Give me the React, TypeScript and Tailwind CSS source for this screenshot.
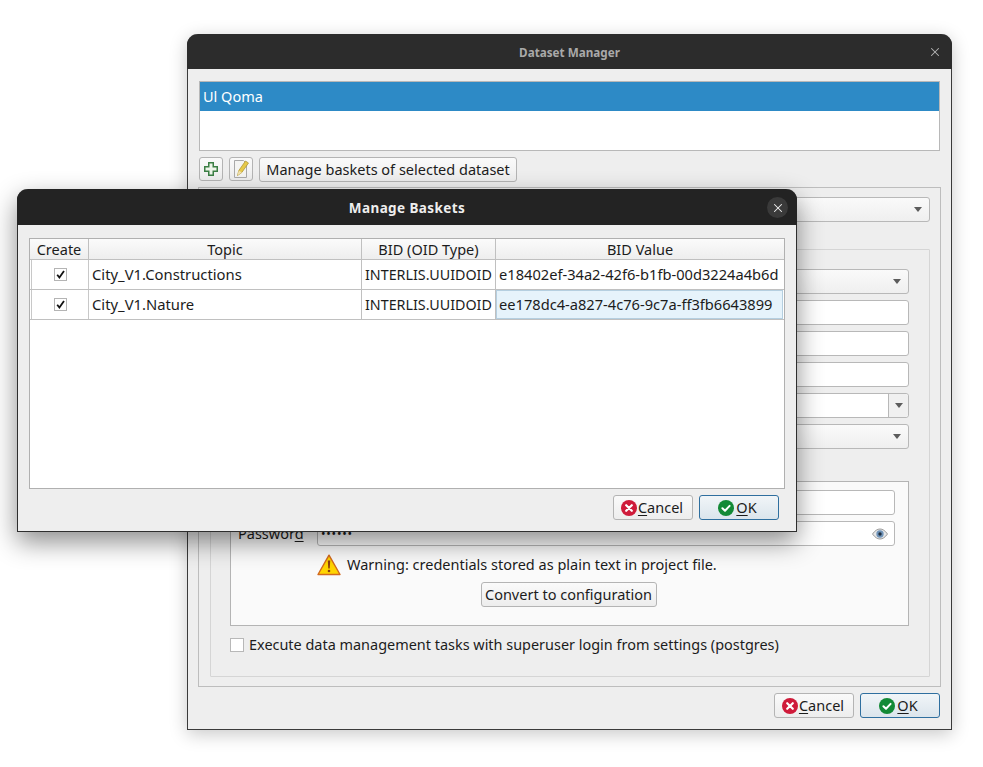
import React from 'react';
import { X } from 'lucide-react';

const font = "font-['Noto_Sans','Open_Sans',sans-serif]";

const Caret = () => (
    <svg width="8" height="5" viewBox="0 0 8 5"><path d="M0 0h8L4 5z" fill="#5c5c5c" /></svg>
);

const CancelIcon = () => (
    <svg width="16" height="16" viewBox="0 0 16 16" className="shrink-0">
        <circle cx="8" cy="8" r="8" fill="#cf1b3a" />
        <path d="M5.2 5.2l5.6 5.6M10.8 5.2l-5.600 5.600" stroke="#fff" strokeWidth="2.2" strokeLinecap="round" />
    </svg>
);

const OkIcon = () => (
    <svg width="16" height="16" viewBox="0 0 16 16" className="shrink-0">
        <circle cx="8" cy="8" r="8" fill="#138a36" />
        <path d="M4.4 8.2l2.6 2.5 4.6-4.8" stroke="#fff" strokeWidth="2" fill="none" strokeLinecap="round" strokeLinejoin="round" />
    </svg>
);

const PlusIcon = () => (
    <svg width="16" height="16" viewBox="0 0 16 16">
        <path d="M5.750 1.750h4.500v4h4v4.500h-4v4h-4.500v-4h-4v-4.500h4z" fill="#eef5ea" stroke="#3c7f45" strokeWidth="1.500" />
    </svg>
);

const NoteIcon = () => (
    <svg width="18" height="20" viewBox="0 0 18 20">
        <path d="M2.500 1.500h9l3 3v14h-12z" fill="#f4f4f2" stroke="#a9a9a9" />
        <path d="M5.500 16.500l1.300-5 6.700-9.500 3 2-6.700 9.500z" fill="#e6c94a" stroke="#a98f2c" strokeWidth="0.700" />
        <path d="M5.500 16.500l1.300-5 3 2z" fill="#f2e2b0" />
    </svg>
);

const WarningIcon = () => (
    <svg width="24" height="22" viewBox="0 0 24 22">
        <path d="M12 1.200L23 20.500H1z" fill="#ffd400" stroke="#d2691e" strokeWidth="1.400" strokeLinejoin="round" />
        <path d="M10.800 6.500h2.400l-.5 8h-1.400z" fill="#8a3d10" />
        <circle cx="12" cy="17" r="1.300" fill="#8a3d10" />
    </svg>
);

const EyeIcon = () => (
    <svg width="16" height="12" viewBox="0 0 16 12">
        <path d="M.5 6C3 2.500 5.500 1 8 1s5 1.500 7.500 5C13 9.500 10.500 11 8 11S3 9.500.5 6z" fill="#e8e8e8" stroke="#9a9a9a" />
        <circle cx="8" cy="6" r="3.700" fill="#6f93b8" />
        <circle cx="8" cy="6" r="1.700" fill="#1f2d3d" />
    </svg>
);

const Field = ({ className = '', children }: { className?: string; children?: React.ReactNode }) => (
    <div className={`h-[25px] bg-white border border-[#b8b8b8] rounded-[3px] flex items-center ${className}`}>{children}</div>
);

const Combo = ({ className = '' }: { className?: string }) => (
    <div className={`h-[25px] bg-gradient-to-b from-[#fafafa] to-[#efefef] border border-[#b8b8b8] rounded-[3px] flex items-center justify-end pr-[7px] ${className}`}>
        <Caret />
    </div>
);

const Button = ({ primary, children, className = '' }: { primary?: boolean; children: React.ReactNode; className?: string }) => (
    <div
        className={`rounded-[3px] border flex items-center justify-center text-[14.500px] text-[#1c1c1c] ${
            primary
                ? 'border-[#2f6f9f] bg-gradient-to-b from-[#f1f5f8] to-[#dbe5ec]'
                : 'border-[#b4b4b4] bg-gradient-to-b from-[#fafafa] to-[#ededed]'
        } ${className}`}
    >
        {children}
    </div>
);

const DialogButtons = () => (
    <div className="flex justify-end gap-[6px]">
        <Button className="w-[80px] h-[25px] gap-[1px] pr-[2px]">
            <CancelIcon />
            <span><span className="underline underline-offset-2">C</span>ancel</span>
        </Button>
        <Button primary className="w-[80px] h-[25px] gap-[2px] pr-[3px]">
            <OkIcon />
            <span><span className="underline underline-offset-2">O</span>K</span>
        </Button>
    </div>
);

const rows = [
    { topic: 'City_V1.Constructions', type: 'INTERLIS.UUIDOID', value: 'e18402ef-34a2-42f6-b1fb-00d3224a4b6d' },
    { topic: 'City_V1.Nature', type: 'INTERLIS.UUIDOID', value: 'ee178dc4-a827-4c76-9c7a-ff3fb6643899' },
];

const colCls = 'grid grid-cols-[59px_273px_134px_288px]';

const Checkbox = () => (
    <div className="w-[13px] h-[13px] bg-white border border-[#b4b4b4] flex items-center justify-center">
        <svg width="9" height="9" viewBox="0 0 9 9">
            <path d="M1.200 4.800l2.200 2.700L8 1" stroke="#111" strokeWidth="1.800" fill="none" />
        </svg>
    </div>
);

const HeaderCell = ({ label }: { label: string }) => (
    <div className="h-[21px] pt-[2px] flex items-center justify-center border-r border-b border-[#c0c0c0] bg-gradient-to-b from-[#fbfbfb] to-[#eeeeee] last:border-r-0 whitespace-nowrap">
        {label}
    </div>
);

const BasketsDialog = () => (
    <div className="absolute left-[17px] top-[189px] w-[780px] h-[343px] flex flex-col rounded-t-[11px] border-x border-b border-[#2e2e2e] bg-[#eeeeee] shadow-[0_10px_26px_rgba(0,0,0,0.45)]">
        <div className="relative h-[37px] -mx-px pt-[3px] rounded-t-[11px] bg-[#232323] flex items-center justify-center text-[13.500px] font-bold text-[#eeeeee] tracking-[0.4px]">
            Manage Baskets
            <div className="absolute right-[9px] top-[8px] w-[21px] h-[21px] rounded-full bg-[#3a3a3a] flex items-center justify-center">
                <X size={14} strokeWidth={1.800} className="text-[#f2f2f2]" />
            </div>
        </div>
        <div className="flex-1 flex flex-col px-[11px] pt-[13px] pb-[11px]">
            <div className="w-[756px] h-[251px] bg-white border border-[#b0b0b0] text-[14.500px] text-[#1c1c1c]">
                <div className={colCls}>
                    {['Create', 'Topic', 'BID (OID Type)', 'BID Value'].map((h) => (
                        <HeaderCell key={h} label={h} />
                    ))}
                </div>
                {rows.map((r, i) => (
                    <div key={r.topic} className={`${colCls} h-[30px] border-b border-[#c0c0c0]`}>
                        <div className="flex items-center justify-center ml-px border-l border-r border-[#c8c8c8]">
                            <Checkbox />
                        </div>
                        <div className="flex items-center pl-[3px] border-r border-[#c0c0c0] text-[14.800px]">{r.topic}</div>
                        <div className="flex items-center pl-[3px] border-r border-[#c0c0c0] whitespace-nowrap text-[14.300px]">{r.type}</div>
                        <div
                            className={`flex items-center whitespace-nowrap text-[14.650px] ${
                                i === 1 ? 'pl-[2px] mr-px bg-[#e6f3fb] border border-[#b5cfe0]' : 'pl-[3px]'
                            }`}
                        >
                            {r.value}
                        </div>
                    </div>
                ))}
            </div>
            <div className="mt-[6px] pr-[6px]">
                <DialogButtons />
            </div>
        </div>
    </div>
);

const DatasetWindow = () => (
    <div className="absolute left-[187px] top-[34px] w-[765px] h-[696px] flex flex-col rounded-t-[11px] border-x border-b border-[#3a3a3a] bg-[#eeeeee] shadow-[0_4px_18px_rgba(0,0,0,0.22)]">
        <div className="relative h-[35px] -mx-px pt-[3px] rounded-t-[11px] bg-[#2c2c2c] flex items-center justify-center text-[11.700px] font-bold text-[#a9a9a9]">
            Dataset Manager
            <X size={14} strokeWidth={1.800} className="absolute right-[10px] top-[11px] text-[#b5b5b5]" />
        </div>
        <div className="flex-1 flex flex-col px-[11px] pt-[12px] text-[14.500px] text-[#1c1c1c]">
            <div className="h-[70px] bg-white border border-[#b8b8b8]">
                <div className="h-[29px] bg-[#2d8ac6] text-white flex items-center pl-[3px]">Ul Qoma</div>
            </div>
            <div className="flex gap-[6px] mt-[6px] items-start">
                <Button className="w-[24px] h-[24px]"><PlusIcon /></Button>
                <Button className="w-[24px] h-[24px]"><NoteIcon /></Button>
                <Button className="w-[258px] h-[25px] whitespace-nowrap">Manage baskets of selected dataset</Button>
            </div>
            <div className="mt-[5px] -mx-px h-[500px] border border-[#bdbdbd] pl-[11px] pr-[10px] pt-[9px]">
                <Combo className="ml-auto w-[300px]" />
                <div className="mt-[27px] h-[428px] border border-[#d5d5d5] rounded-[1px] pl-[19px] pr-[20px] pt-[19px]">
                    <div className="flex flex-col gap-[6px] ml-auto w-[300px]">
                        <Combo />
                        <Field />
                        <Field />
                        <Field />
                        <Field className="justify-end">
                            <div className="h-full w-[20px] border-l border-[#b8b8b8] bg-[#f0f0f0] flex items-center justify-center rounded-r-[3px]">
                                <Caret />
                            </div>
                        </Field>
                        <Combo />
                    </div>
                    <div className="mt-[32px] h-[145px] border border-[#b4b4b4] bg-[#fafafa] pl-[7px] pr-[13px] pt-[8px]">
                        <Field className="ml-[79px]" />
                        <div className="flex items-center mt-[6px]">
                            <span className="w-[79px]">Passwor<span className="underline underline-offset-2">d</span></span>
                            <Field className="flex-1 justify-between pl-[3px] pr-[6px]">
                                <span className="text-[12px] tracking-[0.8px] leading-none">••••••</span>
                                <EyeIcon />
                            </Field>
                        </div>
                        <div className="flex items-center gap-[6px] ml-[79px] mt-[7px] h-[24px]">
                            <WarningIcon />
                            <span className="whitespace-nowrap">Warning: credentials stored as plain text in project file.</span>
                        </div>
                        <div className="flex justify-center mt-[5px] ml-[4px]">
                            <Button className="w-[176px] h-[25px] whitespace-nowrap">Convert to configuration</Button>
                        </div>
                    </div>
                    <div className="flex items-center gap-[5px] mt-[8px]">
                        <div className="w-[14px] h-[14px] bg-white border border-[#b8b8b8]" />
                        <span className="whitespace-nowrap text-[14.450px]">Execute data management tasks with superuser login from settings (postgres)</span>
                    </div>
                </div>
            </div>
            <div className="mt-[6px]">
                <DialogButtons />
            </div>
        </div>
    </div>
);

export default function App() {
    return (
        <div className={`relative w-[983px] h-[767px] bg-white overflow-hidden ${font}`}>
            <DatasetWindow />
            <BasketsDialog />
        </div>
    );
}
